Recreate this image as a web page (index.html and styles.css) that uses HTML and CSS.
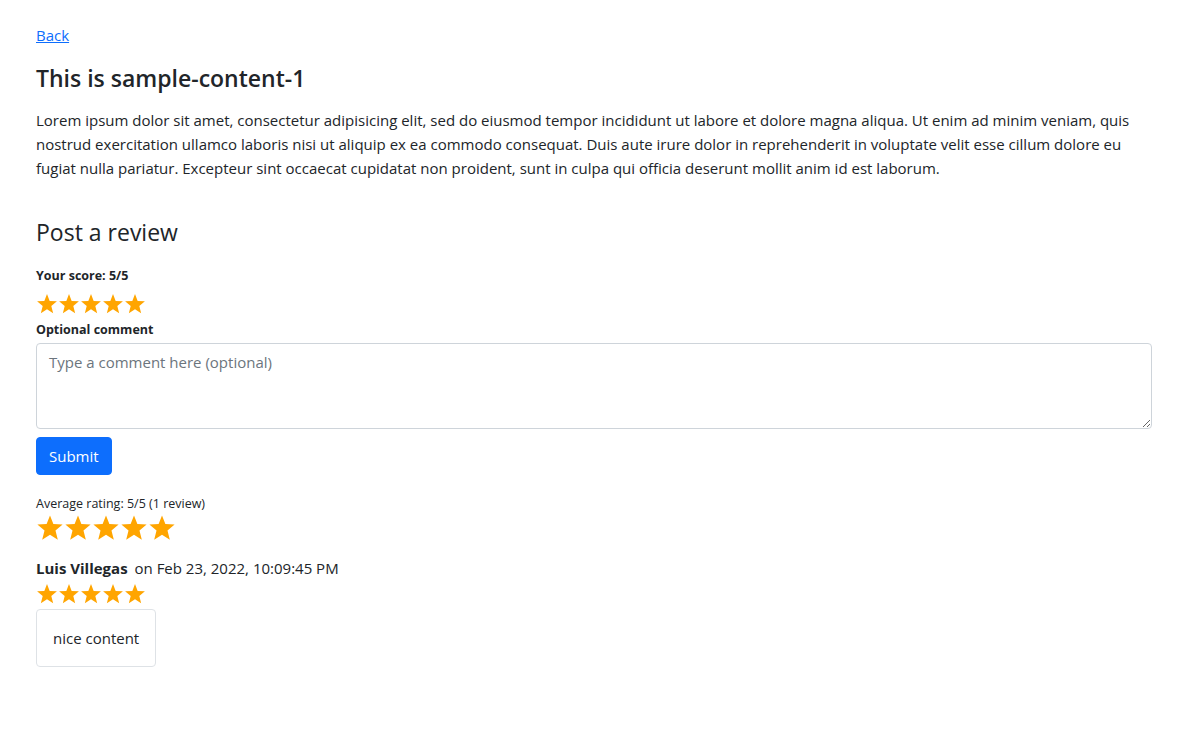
FILE: index.html
```html
<!DOCTYPE html>
<html lang="en">
<head>
    <meta charset="utf-8">
    <meta name="viewport" content="width=device-width,initial-scale=1" />
    <title>sample-content-1</title>
    <link rel="stylesheet" href="styles.css">
</head>
<body>
    <svg class="defs" width="0" height="0">
        <symbol id="star" viewBox="0 0 24 24">
            <polygon points="12,1.2 14.9,8.6 22.8,9.1 16.7,14.2 18.7,22 12,17.7 5.3,22 7.3,14.2 1.2,9.1 9.1,8.6" />
        </symbol>
    </svg>
    <div class="container">
        <div class="back"><a href="#" class="back-link">Back</a></div>
        <h1 class="title">This is sample-content-1</h1>
        <p class="content">Lorem ipsum dolor sit amet, consectetur adipisicing elit, sed do eiusmod tempor incididunt ut labore et dolore magna aliqua. Ut enim ad minim veniam, quis nostrud exercitation ullamco laboris nisi ut aliquip ex ea commodo consequat. Duis aute irure dolor in reprehenderit in voluptate velit esse cillum dolore eu fugiat nulla pariatur. Excepteur sint occaecat cupidatat non proident, sunt in culpa qui officia deserunt mollit anim id est laborum.</p>

        <h2 class="section-title">Post a review</h2>
        <form class="review-form">
            <label class="form-label">Your score: 5/5</label>
            <div class="stars stars-sm">
                <svg><use href="#star" /></svg><svg><use href="#star" /></svg><svg><use href="#star" /></svg><svg><use href="#star" /></svg><svg><use href="#star" /></svg>
            </div>
            <label class="form-label" for="comment">Optional comment</label>
            <textarea id="comment" class="form-control" rows="3" placeholder="Type a comment here (optional)"></textarea>
            <button type="button" class="btn-primary">Submit</button>
        </form>

        <div class="average">
            <div class="average-text">Average rating: 5/5 (1 review)</div>
            <div class="stars stars-lg">
                <svg><use href="#star" /></svg><svg><use href="#star" /></svg><svg><use href="#star" /></svg><svg><use href="#star" /></svg><svg><use href="#star" /></svg>
            </div>
        </div>

        <div class="review">
            <div class="review-meta"><strong>Luis Villegas</strong> on Feb 23, 2022, 10:09:45 PM</div>
            <div class="stars stars-sm">
                <svg><use href="#star" /></svg><svg><use href="#star" /></svg><svg><use href="#star" /></svg><svg><use href="#star" /></svg><svg><use href="#star" /></svg>
            </div>
            <div class="review-body">nice content</div>
        </div>
    </div>
</body>
</html>
```

FILE: styles.css
```css
* {
    box-sizing: border-box;
}

body {
    margin: 0;
    background: #fff;
    color: #212529;
    font-family: 'Open Sans', 'Noto Sans', sans-serif;
    font-size: 15px;
    line-height: 24px;
}

.defs {
    position: absolute;
}

.container {
    padding: 23px 40px 40px 36px;
}

.back {
    margin-bottom: 17px;
}

.back-link {
    color: #0d6efd;
    text-decoration: underline;
}

.title {
    margin: 0 0 15px;
    font-size: 23px;
    line-height: 29px;
    font-weight: 600;
}

.content {
    margin: 0;
}

.section-title {
    margin: 38px 0 19px;
    font-size: 23px;
    line-height: 29px;
    font-weight: 400;
}

.review-form {
    display: flex;
    flex-direction: column;
    align-items: flex-start;
}

.form-label {
    font-size: 12.5px;
    line-height: 20px;
    font-weight: 700;
}

.stars {
    display: flex;
    fill: #ffa500;
}

.stars-sm {
    margin: 7px 0 5px;
}

.stars-sm svg {
    width: 22px;
    height: 22px;
}

.stars-lg svg {
    width: 28px;
    height: 28px;
}

.form-control {
    width: 100%;
    margin-top: 3px;
    padding: 6px 12px;
    border: 1px solid #ced4da;
    border-radius: 4px;
    font-family: inherit;
    font-size: 15px;
    line-height: 24px;
    color: #212529;
}

.form-control::placeholder {
    color: #6c757d;
}

.btn-primary {
    margin-top: 8px;
    height: 38px;
    padding: 6px 12px;
    border: 1px solid #0d6efd;
    border-radius: 4px;
    background: #0d6efd;
    color: #fff;
    font-family: inherit;
    font-size: 15px;
    line-height: 24px;
}

.average {
    margin-top: 19px;
}

.average-text {
    font-size: 12.5px;
    line-height: 20px;
}

.review {
    margin-top: 14px;
}

.review-meta strong {
    font-weight: 700;
    margin-right: 3px;
}

.review .stars-sm {
    margin: 3px 0 4px;
}

.review-body {
    display: inline-block;
    padding: 16px;
    border: 1px solid #dee2e6;
    border-radius: 4px;
}
```
